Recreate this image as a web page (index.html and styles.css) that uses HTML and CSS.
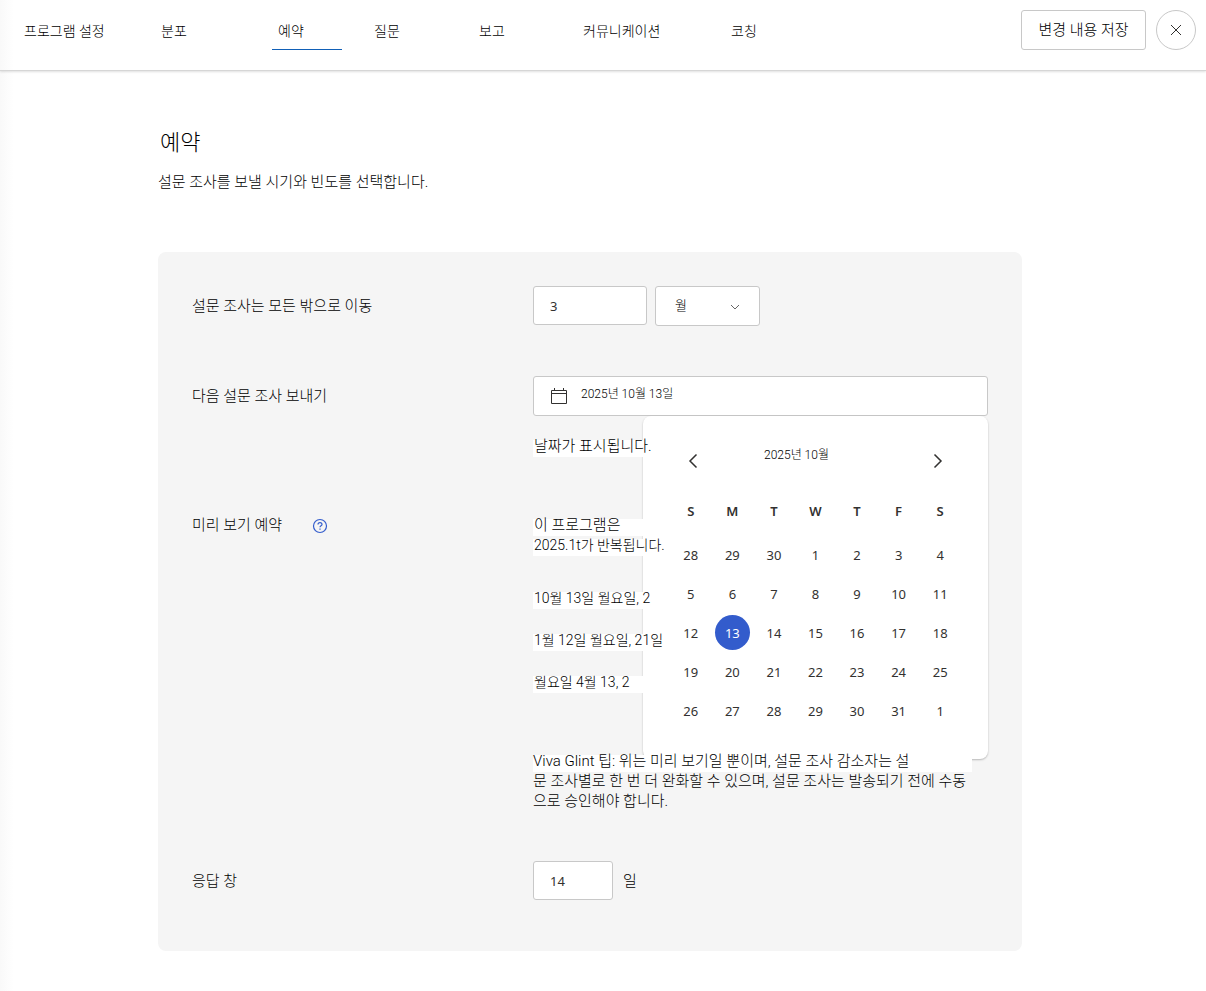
FILE: index.html
```html
<!DOCTYPE html>
<html lang="ko">
  <head>
    <meta charset="utf-8">
    <title>예약</title>
    <link rel="stylesheet" href="styles.css">
  </head>
  <body>
    <header class="topbar">
      <nav class="tabs">
        <a href="#setup">프로그램 설정</a>
        <a href="#distribution">분포</a>
        <a href="#schedule" class="active">예약</a>
        <a href="#questions">질문</a>
        <a href="#reporting">보고</a>
        <a href="#communications">커뮤니케이션</a>
        <a href="#coaching">코칭</a>
      </nav>
      <div class="actions">
        <button type="button" class="save-button">변경 내용 저장</button>
        <button type="button" class="close-button" aria-label="닫기">
          <svg width="12" height="12" viewBox="0 0 12 12"><path d="M1 1l10 10M11 1L1 11"/></svg>
        </button>
      </div>
    </header>

    <main>
      <h1>예약</h1>
      <p class="subtitle">설문 조사를 보낼 시기와 빈도를 선택합니다.</p>

      <form class="card">
        <div class="row">
          <label class="row-label" for="every">설문 조사는 모든 밖으로 이동</label>
          <div class="row-content inline">
            <input type="text" id="every" class="field every" value="3">
            <div class="select-wrap">
              <select id="unit" class="field unit" aria-label="단위">
                <option>월</option>
              </select>
              <svg class="chevron" width="10" height="6" viewBox="0 0 10 6"><path d="M1 1l4 4 4-4"/></svg>
            </div>
          </div>
        </div>

        <div class="row">
          <label class="row-label" for="next-date">다음 설문 조사 보내기</label>
          <div class="row-content">
            <div class="date-wrap">
              <input type="text" id="next-date" class="field date" value="2025년 10월 13일">
              <svg class="calendar-icon" width="18" height="18" viewBox="0 0 18 18"><path d="M1.500 3.500h15v13h-15zM1.500 6.500h15M4.500 1v2.500M13.500 1v2.500"/></svg>

              <div class="calendar">
                <div class="calendar-head">
                  <button type="button" aria-label="이전 달"><svg width="10" height="16" viewBox="0 0 10 16"><path d="M8.500 1.500L2 8l6.500 6.500"/></svg></button>
                  <span class="calendar-title">2025년 10월</span>
                  <button type="button" class="next" aria-label="다음 달"><svg width="10" height="16" viewBox="0 0 10 16"><path d="M1.500 1.500L8 8l-6.500 6.500"/></svg></button>
                </div>
                <table>
                  <thead>
                    <tr><th>S</th><th>M</th><th>T</th><th>W</th><th>T</th><th>F</th><th>S</th></tr>
                  </thead>
                  <tbody id="days"></tbody>
                </table>
              </div>
            </div>
            <p class="hint"><span class="patch">날짜가 표시됩니다.</span></p>
          </div>
        </div>

        <div class="row preview">
          <div class="row-label">
            미리 보기 예약
            <button type="button" class="help" aria-label="도움말">
              <svg width="16" height="16" viewBox="0 0 16 16"><circle cx="8" cy="8" r="6.500"/><path d="M6 6.500c0-2.600 4-2.600 4 0 0 1.300-2 1.400-2 2.700M8 10.600v1.200"/></svg>
            </button>
          </div>
          <div class="row-content">
            <p>
              <span class="patch">이 프로그램은</span><br>
              <span class="patch small">2025.1t가 반복됩니다.</span>
            </p>
            <ul class="dates">
              <li><span class="patch small">10월 13일 월요일, 2</span></li>
              <li><span class="patch small">1월 12일 월요일, 21일</span></li>
              <li><span class="patch small">월요일 4월 13, 2</span></li>
            </ul>
            <p class="tip">
              <span class="patch wide">Viva Glint 팁: 위는 미리 보기일 뿐이며, 설문 조사 감소자는 설</span><br>
              문 조사별로 한 번 더 완화할 수 있으며, 설문 조사는 발송되기 전에 수동<br>
              으로 승인해야 합니다.
            </p>
          </div>
        </div>

        <div class="row">
          <label class="row-label" for="window">응답 창</label>
          <div class="row-content inline">
            <input type="text" id="window" class="field window" value="14">
            <span>일</span>
          </div>
        </div>
      </form>
    </main>
    <script src="script.js"></script>
  </body>
</html>
```
FILE: styles.css
```css
* {
  box-sizing: border-box;
}

body {
  margin: 0;
  background: linear-gradient(to right, #f9f9f9, #fff 14px);
  color: #000;
  font-family: Roboto, "Noto Sans CJK KR", sans-serif;
  font-size: 15px;
  font-weight: 300;
  line-height: 20px;
}

p,
ul {
  margin: 0;
  padding: 0;
  list-style: none;
}

button {
  padding: 0;
  border: none;
  background: none;
  color: inherit;
  font: inherit;
  cursor: pointer;
}

svg {
  display: block;
  fill: none;
  stroke: #323130;
}

.topbar {
  display: flex;
  justify-content: space-between;
  height: 71px;
  padding: 10px 10px 0 18px;
  border-bottom: 1px solid #d6d6d6;
  box-shadow: 0 1px 2px rgba(0, 0, 0, 0.12);
}

.tabs {
  display: grid;
  grid-template-columns: 137px 117px 96px 105px 104px 148px auto;
  align-items: start;
}

.tabs a {
  height: 40px;
  padding: 11px 6px 0;
  color: #000;
  font-size: 14px;
  text-decoration: none;
}

.tabs .active {
  width: 70px;
  border-bottom: 1px solid #1160b7;
}

.actions {
  display: flex;
  gap: 10px;
}

.save-button {
  min-width: 125px;
  height: 40px;
  padding: 0 16px;
  border: 1px solid #c8c8c8;
  border-radius: 3px;
  background: #fff;
}

.close-button {
  display: flex;
  align-items: center;
  justify-content: center;
  width: 40px;
  height: 40px;
  border: 1px solid #c8c8c8;
  border-radius: 50%;
  background: #fff;
}

main {
  padding: 56px 184px 40px 158px;
}

h1 {
  margin: 0;
  padding-left: 2px;
  font-size: 22px;
  font-weight: 300;
  line-height: 32px;
}

.subtitle {
  margin: 13px 0 60px;
}

.card {
  padding: 34px 34px 51px;
  border-radius: 8px;
  background: #f5f5f5;
}

.row {
  display: flex;
}

.row + .row {
  margin-top: 50px;
}

.row-label {
  display: flex;
  gap: 30px;
  width: 341px;
  flex-shrink: 0;
  padding-top: 10px;
}

.row-content {
  flex: 1;
}

.inline {
  display: flex;
  align-items: flex-start;
  gap: 8px;
}

.inline span {
  padding: 10px 2px 0;
}

.field {
  height: 39px;
  padding: 0 16px;
  border: 1px solid #c8c8c8;
  border-radius: 3px;
  background: #fff;
  color: #323130;
  font-family: "Noto Sans", "Noto Sans CJK KR", sans-serif;
  font-size: 13px;
}

.every {
  width: 114px;
}

.window {
  width: 80px;
}

.select-wrap,
.date-wrap {
  position: relative;
}

.unit {
  width: 105px;
  height: 40px;
  padding: 0 19px 2px;
  appearance: none;
  color: #000;
  font-weight: 300;
}

.chevron {
  position: absolute;
  top: 18px;
  right: 20px;
  stroke: #666;
  pointer-events: none;
}

.date {
  display: block;
  width: 100%;
  height: 40px;
  padding: 0 16px 8px 47px;
  color: #000;
  font-family: Roboto, "Noto Sans CJK KR", sans-serif;
  font-size: 12px;
  font-weight: 300;
}

.calendar-icon {
  position: absolute;
  top: 11px;
  left: 17px;
}

.calendar {
  position: absolute;
  top: 40px;
  right: 0;
  z-index: 1;
  width: 345px;
  padding: 29px 27px;
  border-radius: 8px;
  background: #fff;
  box-shadow: 0 1px 2px rgba(0, 0, 0, 0.25);
}

.calendar-head {
  display: flex;
  align-items: flex-start;
  margin-bottom: 14px;
  padding: 0 8px;
}

.calendar-head button {
  display: flex;
  align-items: center;
  justify-content: center;
  width: 30px;
  height: 32px;
}

.calendar-head svg {
  stroke-width: 1.5;
}

.calendar-head .next {
  margin-left: auto;
}

.calendar-title {
  margin-left: 56px;
  font-size: 12px;
}

.calendar table {
  width: 100%;
  border-collapse: collapse;
  table-layout: fixed;
  color: #323130;
  font-family: "Noto Sans", sans-serif;
  font-size: 13px;
  font-weight: 400;
  text-align: center;
}

.calendar th {
  height: 44px;
  padding: 0 0 5px;
  font-weight: 600;
}

.calendar td {
  height: 39px;
  padding: 0;
}

.calendar td button {
  width: 35px;
  height: 35px;
  border-radius: 50%;
}

.calendar td .selected {
  background: #335ccc;
  color: #fff;
}

.hint {
  margin-top: 20px;
}

/* readable over the open calendar */
.patch {
  position: relative;
  z-index: 2;
  display: inline-block;
  min-width: 112px;
  height: 21px;
  margin-bottom: -1px;
  padding-left: 1px;
  background: linear-gradient(transparent 4px, #fff 4px);
  vertical-align: top;
  white-space: nowrap;
}

.small {
  font-size: 14px;
}

.wide {
  min-width: 439px;
  padding-left: 0;
}

.row.preview {
  margin-top: 59px;
}

.preview .row-label {
  padding-top: 0;
}

.help {
  height: 16px;
  margin-top: 3px;
}

.help svg {
  stroke: #335ccc;
  stroke-width: 1.2;
}

.dates {
  display: flex;
  flex-direction: column;
  gap: 22px;
  margin: 33px 0 59px;
}

.dates li {
  height: 20px;
}

.tip {
  white-space: nowrap;
}
```
FILE: script.js
```js
var tbody = document.getElementById('days');
var days = [28, 29, 30];
for (var d = 1; d <= 31; d++) {
  days.push(d);
}
days.push(1);

for (var i = 0; i < days.length; i += 7) {
  var tr = document.createElement('tr');
  days.slice(i, i + 7).forEach(function (day) {
    var td = document.createElement('td');
    var button = document.createElement('button');
    button.type = 'button';
    button.textContent = day;
    if (day === 13) {
      button.className = 'selected';
    }
    td.appendChild(button);
    tr.appendChild(td);
  });
  tbody.appendChild(tr);
}
```
